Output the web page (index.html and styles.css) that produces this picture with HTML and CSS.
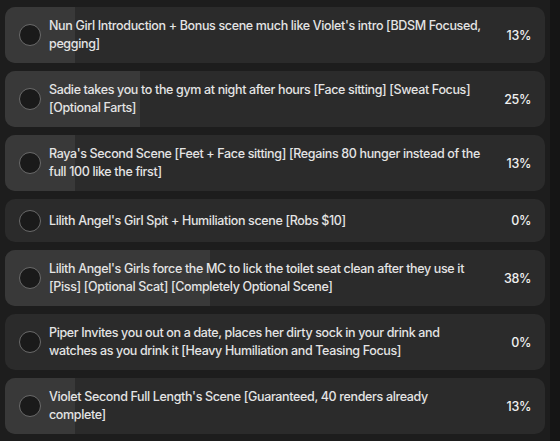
FILE: index.html
```html
<!DOCTYPE html>
<html>
<head>
<meta charset="utf-8">
<link rel="stylesheet" href="styles.css">
</head>
<body>
<div class="poll">
  <div class="answer">
    <div class="fill" style="width:13%"></div>
    <span class="radio"></span>
    <span class="label">Nun Girl Introduction + Bonus scene much like Violet's intro [BDSM Focused, pegging]</span>
    <span class="pct">13%</span>
  </div>
  <div class="answer">
    <div class="fill" style="width:25%"></div>
    <span class="radio"></span>
    <span class="label">Sadie takes you to the gym at night after hours [Face sitting] [Sweat Focus] [Optional Farts]</span>
    <span class="pct">25%</span>
  </div>
  <div class="answer">
    <div class="fill" style="width:13%"></div>
    <span class="radio"></span>
    <span class="label">Raya's Second Scene [Feet + Face sitting] [Regains 80 hunger instead of the full 100 like the first]</span>
    <span class="pct">13%</span>
  </div>
  <div class="answer">
    <div class="fill" style="width:0%"></div>
    <span class="radio"></span>
    <span class="label">Lilith Angel's Girl Spit + Humiliation scene [Robs $10]</span>
    <span class="pct">0%</span>
  </div>
  <div class="answer">
    <div class="fill" style="width:38%"></div>
    <span class="radio"></span>
    <span class="label">Lilith Angel's Girls force the MC to lick the toilet seat clean after they use it [Piss] [Optional Scat] [Completely Optional Scene]</span>
    <span class="pct">38%</span>
  </div>
  <div class="answer">
    <div class="fill" style="width:0%"></div>
    <span class="radio"></span>
    <span class="label">Piper Invites you out on a date, places her dirty sock in your drink and watches as you drink it [Heavy Humiliation and Teasing Focus]</span>
    <span class="pct">0%</span>
  </div>
  <div class="answer">
    <div class="fill" style="width:13%"></div>
    <span class="radio"></span>
    <span class="label">Violet Second Full Length's Scene [Guaranteed, 40 renders already complete]</span>
    <span class="pct">13%</span>
  </div>
</div>
</body>
</html>
```
FILE: styles.css
```css
html, body {
  margin: 0;
  padding: 0;
  background: #151515;
  height: 100%;
}
body {
  font-family: Inter, "Noto Sans", sans-serif;
  overflow: hidden;
}
.poll {
  width: 550px;
  min-height: 100%;
  background: #1d1d1d;
  padding: 7px 5px 0 5px;
  box-sizing: border-box;
  display: flex;
  flex-direction: column;
  gap: 8px;
}
.answer {
  position: relative;
  width: 540px;
  box-sizing: border-box;
  background: #2b2b2b;
  border-radius: 10px;
  overflow: hidden;
  display: flex;
  align-items: center;
  padding: 10px 14px 10px 14px;
  min-height: 43px;
}
.fill {
  position: absolute;
  left: 0;
  top: 0;
  bottom: 0;
  background: #393939;
}
.radio {
  position: relative;
  flex: none;
  width: 22px;
  height: 22px;
  box-sizing: border-box;
  border-radius: 50%;
  background: #1a1a1a;
  border: 1px solid #6a6a6a;
  margin-right: 8px;
}
.label {
  position: relative;
  flex: 1;
  color: #e4e4e4;
  font-size: 12.5px;
  letter-spacing: -0.35px;
  font-weight: 500;
  line-height: 18px;
}
.pct {
  position: relative;
  flex: none;
  width: 45px;
  text-align: right;
  color: #f0f0f0;
  font-size: 12.5px;
  letter-spacing: -0.35px;
  font-weight: 500;
}
```
